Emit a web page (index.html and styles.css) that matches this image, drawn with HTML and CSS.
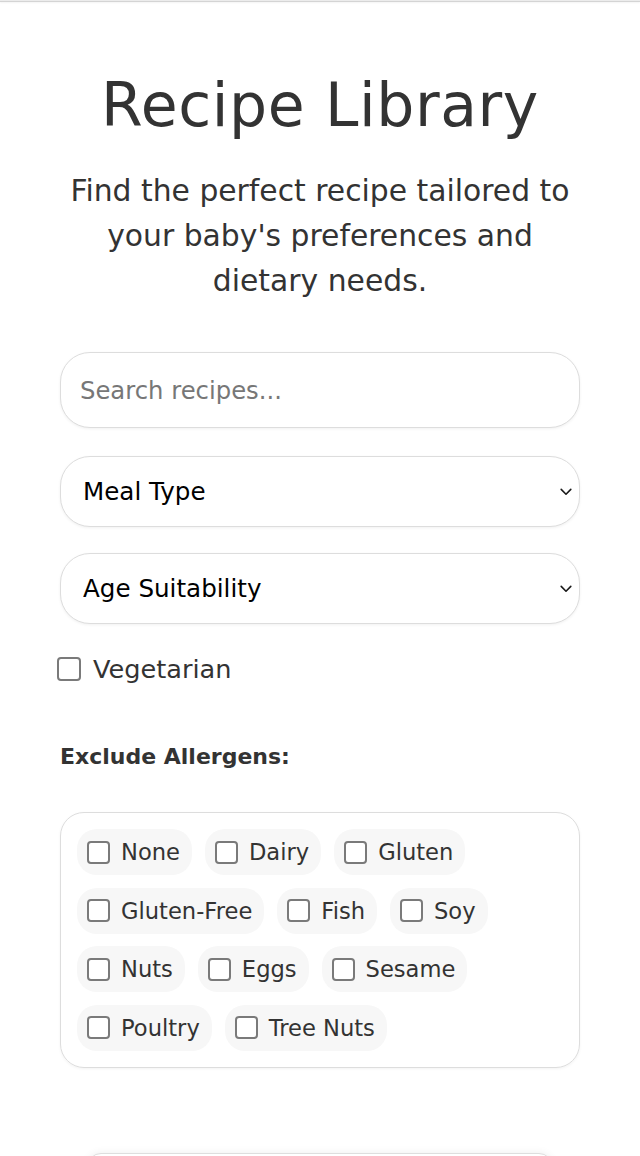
FILE: index.html
```html
<!DOCTYPE html>
<html lang="en">
<head>
<meta charset="utf-8">
<title>Recipe Library</title>
<link rel="stylesheet" href="styles.css">
</head>
<body>
<div class="topbar"></div>
<main class="library">
  <h1 class="title">Recipe Library</h1>
  <p class="subtitle">Find the perfect recipe tailored to your baby's preferences and dietary needs.</p>

  <section class="filters">
    <input class="search" type="text" placeholder="Search recipes...">

    <div class="select-wrap first">
      <select class="select"><option>Meal Type</option></select>
      <svg class="chev" viewBox="0 0 12 8" width="12" height="8"><path d="M1.2 1.4 L6 6.2 L10.8 1.4" fill="none" stroke="#1a1a1a" stroke-width="1.6" stroke-linecap="round" stroke-linejoin="round"/></svg>
    </div>

    <div class="select-wrap second">
      <select class="select"><option>Age Suitability</option></select>
      <svg class="chev" viewBox="0 0 12 8" width="12" height="8"><path d="M1.2 1.4 L6 6.2 L10.8 1.4" fill="none" stroke="#1a1a1a" stroke-width="1.6" stroke-linecap="round" stroke-linejoin="round"/></svg>
    </div>

    <label class="check-row">
      <input class="box" type="checkbox">
      <span>Vegetarian</span>
    </label>

    <h3 class="allergen-title">Exclude Allergens:</h3>

    <div class="allergens">
      <label class="chip"><input class="box" type="checkbox"><span>None</span></label>
      <label class="chip"><input class="box" type="checkbox"><span>Dairy</span></label>
      <label class="chip"><input class="box" type="checkbox"><span>Gluten</span></label>
      <label class="chip"><input class="box" type="checkbox"><span>Gluten-Free</span></label>
      <label class="chip"><input class="box" type="checkbox"><span>Fish</span></label>
      <label class="chip"><input class="box" type="checkbox"><span>Soy</span></label>
      <label class="chip"><input class="box" type="checkbox"><span>Nuts</span></label>
      <label class="chip"><input class="box" type="checkbox"><span>Eggs</span></label>
      <label class="chip"><input class="box" type="checkbox"><span>Sesame</span></label>
      <label class="chip"><input class="box" type="checkbox"><span>Poultry</span></label>
      <label class="chip"><input class="box" type="checkbox"><span>Tree Nuts</span></label>
    </div>
  </section>

  <div class="card"></div>
</main>
</body>
</html>
```
FILE: styles.css
```css
* { box-sizing: border-box; }

html, body {
  margin: 0;
  padding: 0;
  background: #ffffff;
}

body {
  font-family: "DejaVu Sans", "Noto Sans", sans-serif;
  color: #333333;
  overflow: hidden;
}

.topbar {
  height: 2px;
  border-top: 1px solid #ececec;
  border-bottom: 1px solid #d4d4d4;
  box-shadow: 0 1px 2px rgba(0, 0, 0, 0.05);
}

.library {
  width: 520px;
  margin: 0 auto;
}

.title {
  margin: 69px 0 0;
  font-size: 60px;
  line-height: 68px;
  font-weight: 400;
  text-align: center;
  color: #333333;
  letter-spacing: 0.6px;
}

.subtitle {
  margin: 28.5px 0 0;
  font-size: 29.8px;
  line-height: 45px;
  text-align: center;
  color: #333333;
}

.filters {
  display: flex;
  flex-direction: column;
  margin-top: 49.5px;
}

.search {
  display: block;
  width: 100%;
  height: 76px;
  padding: 0 19px;
  border: 1px solid #dddddd;
  border-radius: 30px;
  box-shadow: 0 1px 3px rgba(0, 0, 0, 0.06);
  font-family: inherit;
  font-size: 24.3px;
  color: #333333;
  background: #ffffff;
  outline: none;
}

.search::placeholder {
  color: #777777;
}

.select-wrap {
  position: relative;
  height: 71px;
}

.select-wrap.first { margin-top: 28px; }
.select-wrap.second { margin-top: 26px; }

.select {
  -webkit-appearance: none;
  appearance: none;
  display: block;
  width: 100%;
  height: 71px;
  padding: 0 40px 0 22px;
  border: 1px solid #dddddd;
  border-radius: 30px;
  box-shadow: 0 1px 3px rgba(0, 0, 0, 0.06);
  font-family: inherit;
  font-size: 24.6px;
  color: #000000;
  background: #ffffff;
  outline: none;
}

.chev {
  position: absolute;
  right: 8px;
  top: 32px;
  pointer-events: none;
}

.box {
  -webkit-appearance: none;
  appearance: none;
  flex: none;
  width: 23px;
  height: 23px;
  margin: 0;
  border: 2px solid #7a7a7a;
  border-radius: 4px;
  background: #ffffff;
}

.check-row {
  display: flex;
  align-items: center;
  gap: 12px;
  height: 24px;
  margin: 32.5px 0 0 -3px;
  font-size: 25.6px;
  color: #333333;
}

.check-row .box {
  width: 24px;
  height: 24px;
}

.allergen-title {
  margin: 63px 0 0;
  font-size: 22px;
  line-height: 26px;
  font-weight: 700;
  color: #333333;
}

.allergens {
  display: flex;
  flex-wrap: wrap;
  gap: 12.5px 13px;
  margin-top: 42.5px;
  padding: 16px;
  border: 1px solid #dddddd;
  border-radius: 24px;
  box-shadow: 0 1px 3px rgba(0, 0, 0, 0.05);
}

.chip {
  display: inline-flex;
  align-items: center;
  gap: 11px;
  height: 46px;
  padding: 0 12px 0 10px;
  border-radius: 20px;
  background: #f7f7f7;
  font-size: 22.6px;
  color: #333333;
}

.card {
  width: 466px;
  height: 160px;
  margin: 85.5px auto 0;
  border: 1px solid #dedede;
  border-radius: 14px;
  box-shadow: 0 0 8px rgba(0, 0, 0, 0.07);
  background: #ffffff;
}
```
